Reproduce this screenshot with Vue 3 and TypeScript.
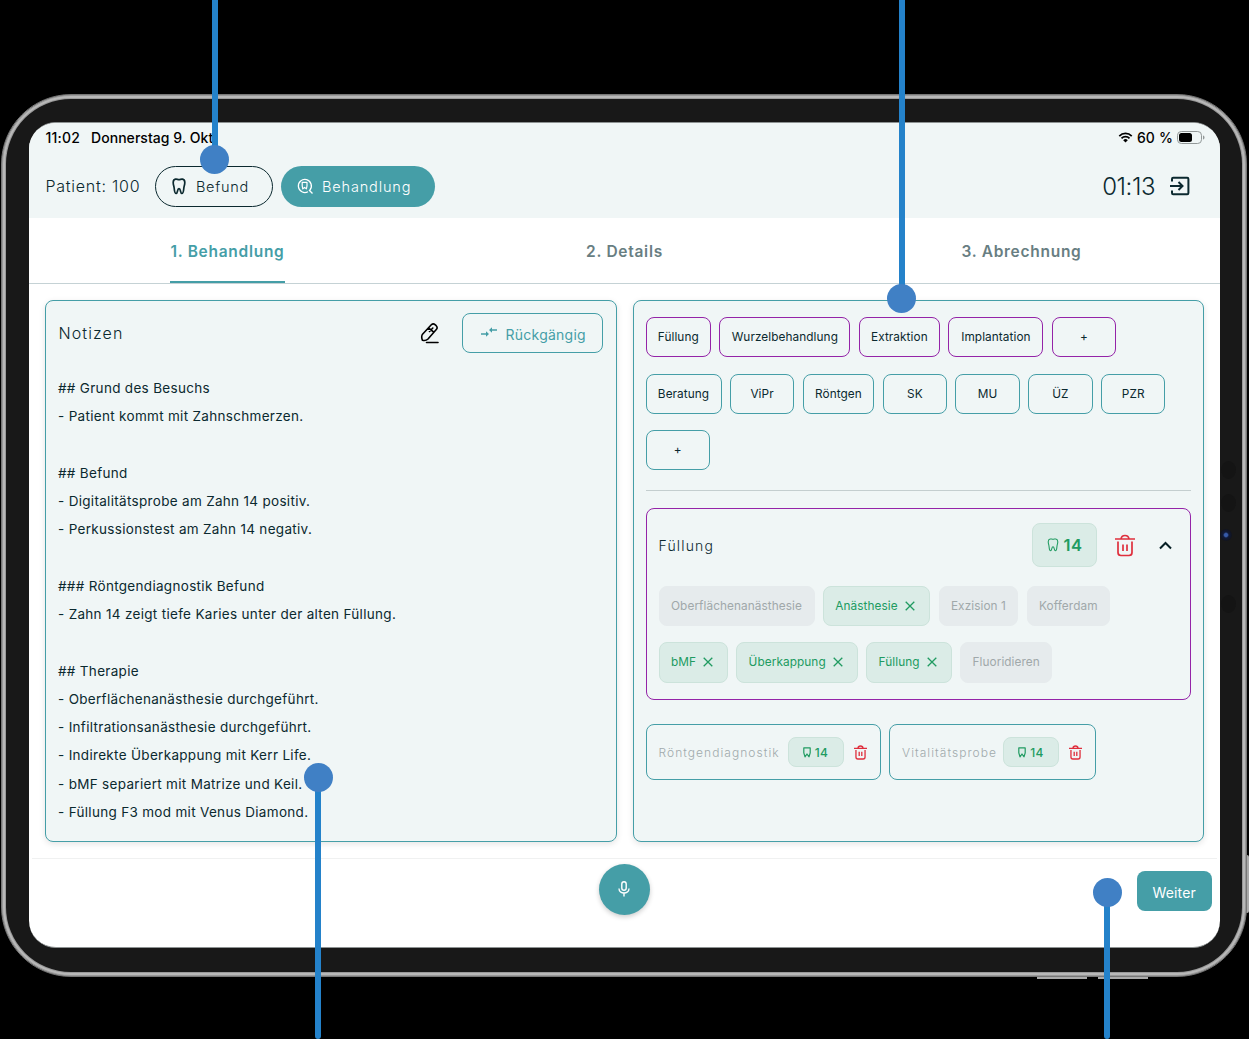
<script setup lang="ts">
interface Chip {
  label: string
  width: number
  active?: boolean
}

const treatments: Chip[] = [
  { label: 'Füllung', width: 65.5 },
  { label: 'Wurzelbehandlung', width: 131 },
  { label: 'Extraktion', width: 81.5 },
  { label: 'Implantation', width: 95 },
  { label: '+', width: 64.5 },
]
const services: Chip[] = [
  { label: 'Beratung', width: 76 },
  { label: 'ViPr', width: 64.5 },
  { label: 'Röntgen', width: 71.7 },
  { label: 'SK', width: 64.5 },
  { label: 'MU', width: 64.5 },
  { label: 'ÜZ', width: 64.5 },
  { label: 'PZR', width: 64.5 },
  { label: '+', width: 64.5 },
]
const steps: Chip[] = [
  { label: 'Oberflächenanästhesie', width: 156 },
  { label: 'Anästhesie', width: 107.5, active: true },
  { label: 'Exzision 1', width: 79.7 },
  { label: 'Kofferdam', width: 83.5 },
  { label: 'bMF', width: 69.3, active: true },
  { label: 'Überkappung', width: 121.7, active: true },
  { label: 'Füllung', width: 85.8, active: true },
  { label: 'Fluoridieren', width: 92 },
]
const diagnostics: Chip[] = [
  { label: 'Röntgendiagnostik', width: 235 },
  { label: 'Vitalitätsprobe', width: 207 },
]
const notes: string[] = [
  '## Grund des Besuchs',
  '- Patient kommt mit Zahnschmerzen.',
  '',
  '## Befund',
  '- Digitalitätsprobe am Zahn 14 positiv.',
  '- Perkussionstest am Zahn 14 negativ.',
  '',
  '### Röntgendiagnostik Befund',
  '- Zahn 14 zeigt tiefe Karies unter der alten Füllung.',
  '',
  '## Therapie',
  '- Oberflächenanästhesie durchgeführt.',
  '- Infiltrationsanästhesie durchgeführt.',
  '- Indirekte Überkappung mit Kerr Life.',
  '- bMF separiert mit Matrize und Keil.',
  '- Füllung F3 mod mit Venus Diamond.',
]
const toothPath =
  'M3.500 1.200C2 1.500 1.200 2.700 1.200 4.500c0 2.500.8 3.500 1 5.800.2 2.400.4 5.200 1.900 5.200 1.700 0 1-4.800 2.900-4.800s1.200 4.800 2.900 4.800c1.500 0 1.700-2.800 1.900-5.200.2-2.300 1-3.300 1-5.800 0-1.800-.8-3-2.300-3.300C9 .9 8.500 1.600 7 1.600S5 .9 3.500 1.200Z'
const trashPath =
  'M0 5h20M6 5c.3-2.300 1.600-3.500 4-3.500S13.700 2.700 14 5M3 7.500v11c0 2 1 3 3 3h8c2 0 3-1 3-3v-11M8 10.500v6.500M12 10.500v6.500'
</script>

<template>
  <main class="stage">
    <i class="hw side"></i>
    <i class="hw bottom first"></i>
    <i class="hw bottom second"></i>
    <div class="tablet">
      <i class="sensor s1"></i>
      <i class="sensor s2"></i>
      <i class="sensor s3"></i>
      <i class="lens"></i>
      <div class="screen">
        <header class="header">
          <div class="status">
            <span class="clock">11:02</span>
            <span class="date">Donnerstag 9. Okt</span>
            <svg class="wifi" width="15" height="11" viewBox="0 0 16 12">
              <path d="M1.200 4.400a9.700 9.700 0 0 1 13.600 0M3.600 7a6.200 6.200 0 0 1 8.800 0" fill="none" stroke="#000" stroke-width="1.900" />
              <path d="M8 11.500 5.500 8.900a3.500 3.500 0 0 1 5 0Z" />
            </svg>
            <span class="percent">60 %</span>
            <svg class="battery" width="28" height="13" viewBox="0 0 28 13">
              <rect x=".5" y=".5" width="24" height="12" rx="3.800" fill="none" stroke="#929898" />
              <rect x="2" y="2" width="13" height="9" rx="2.500" />
              <path d="M26 4.500c2 .6 2 3.400 0 4Z" fill="#929898" />
            </svg>
          </div>
          <div class="toolbar">
            <span class="patient">Patient: 100</span>
            <button class="pill outline">
              <svg width="14" height="17" viewBox="0 0 14 17"><path :d="toothPath" class="line" stroke-width="1.700" /></svg>
              <span>Befund</span>
            </button>
            <button class="pill filled">
              <svg width="17" height="17" viewBox="0 0 17 17">
                <path d="M11 13.700a6.500 6.500 0 1 1 2-1.700M12 12l3.500 3.500" class="line" stroke-width="1.300" />
                <path d="M5.200 4.400h4.800v3.500l-.6 3-1.800-1.500-1.800 1.500-.6-3Z" class="line" stroke-width="1.200" />
              </svg>
              <span>Behandlung</span>
            </button>
            <span class="timer">01:13</span>
            <svg class="exit" width="20" height="20" viewBox="0 0 20 20">
              <path d="M2 5.500V3q0-1.200 1.200-1.200h14q1.200 0 1.200 1.200v14q0 1.200-1.200 1.200h-14Q2 18.200 2 17v-2.500M0 10h12M8.500 6l4 4-4 4" fill="none" stroke="currentColor" stroke-width="2" />
            </svg>
          </div>
        </header>
        <nav class="tabs">
          <div class="tab current"><span>1. Behandlung</span></div>
          <div class="tab"><span>2. Details</span></div>
          <div class="tab third"><span>3. Abrechnung</span></div>
        </nav>
        <div class="panels">
          <section class="panel notes">
            <div class="notes-head">
              <h2>Notizen</h2>
              <svg class="eraser" width="20" height="22" viewBox="0 0 20 22">
                <path d="M2.300 12.500 11.300 2.800q1.900-1.900 3.700-.2l1.200 1.100q1.800 1.900.1 3.800L8 17q-2.200 2.200-5.500 1.300-1.500-3.300-.2-5.800ZM8.500 6l5.300 4.200M9.500 9.500l3.300-3.500M6.500 20.500H18" fill="none" stroke="#000" stroke-width="1.600" stroke-linecap="round" stroke-linejoin="round" />
              </svg>
              <button class="undo">
                <svg width="16" height="12" viewBox="0 0 16 12">
                  <path d="M0 8h7M9 4h7" fill="none" stroke="currentColor" stroke-width="1.300" />
                  <path d="m5 5.200 3 2.800-3 2.800ZM11 1.200 8 4l3 2.800Z" fill="currentColor" />
                </svg>
                <span>Rückgängig</span>
              </button>
            </div>
            <div class="note-text">
              <p v-for="(line, i) in notes" :key="i">{{ line }}</p>
            </div>
          </section>
          <section class="panel actions">
            <div class="chips violet">
              <button v-for="chip in treatments" :key="chip.label" class="chip" :style="{ width: chip.width + 'px' }">{{ chip.label }}</button>
            </div>
            <div class="chips teal">
              <button v-for="chip in services" :key="chip.label" class="chip" :style="{ width: chip.width + 'px' }">{{ chip.label }}</button>
            </div>
            <hr />
            <article class="group">
              <div class="group-head">
                <h3>Füllung</h3>
                <span class="tooth-badge">
                  <svg width="12" height="14" viewBox="0 0 14 17"><path :d="toothPath" class="line" stroke-width="1.300" /></svg>
                  14
                </span>
                <svg class="trash" width="20" height="23" viewBox="0 0 20 23"><path :d="trashPath" class="line" stroke-width="1.700" /></svg>
                <svg class="chevron" width="13" height="9" viewBox="0 0 13 9"><path d="m1 7.500 5.500-5.500L12 7.500" fill="none" stroke="#061f25" stroke-width="2" /></svg>
              </div>
              <div class="chips steps">
                <button v-for="chip in steps" :key="chip.label" class="chip" :class="{ active: chip.active }" :style="{ width: chip.width + 'px' }">
                  {{ chip.label }}
                  <svg v-if="chip.active" width="10" height="10" viewBox="0 0 10 10"><path d="m.7.7 8.600 8.600M9.300.7.7 9.300" class="line" stroke-width="1.300" /></svg>
                </button>
              </div>
            </article>
            <div class="diagnostics">
              <div v-for="item in diagnostics" :key="item.label" class="diagnostic" :style="{ width: item.width + 'px' }">
                <span class="name">{{ item.label }}</span>
                <span class="tooth-badge small">
                  <svg width="8" height="11" viewBox="0 0 8 11"><path d="M.8.9h6.400v5L6 9.800 4 7 2 9.800.8 5.900Z" class="line" stroke-width="1.200" /></svg>
                  14
                </span>
                <svg class="trash" width="13" height="15" viewBox="0 0 20 23"><path :d="trashPath" class="line" stroke-width="2" /></svg>
              </div>
            </div>
          </section>
        </div>
        <footer class="footer">
          <button class="mic" aria-label="Aufnahme">
            <svg width="14" height="18" viewBox="0 0 14 18"><path d="M4.800 4a2.200 2.200 0 0 1 4.400 0v4a2.200 2.200 0 0 1-4.400 0ZM2 8.500c0 6 10 6 10 0M7 13v3.500" class="line" stroke-width="1.400" /></svg>
          </button>
          <button class="next">Weiter</button>
        </footer>
      </div>
    </div>
    <i class="pin down p1"></i>
    <i class="pin down p2"></i>
    <i class="pin up p3"></i>
    <i class="pin up p4"></i>
  </main>
</template>

<style>
body {
  margin: 0;
  background: #000;
}
</style>

<style scoped>
* {
  box-sizing: border-box;
}
button {
  font: inherit;
  color: inherit;
  background: none;
  border: 0;
  padding: 0;
}
h2,
h3,
p {
  margin: 0;
  font-weight: 400;
}
svg {
  flex: none;
  display: block;
}
.line {
  fill: none;
  stroke: currentColor;
  stroke-linejoin: round;
}
.stage {
  position: relative;
  width: 1249px;
  height: 1039px;
  overflow: hidden;
  background: #000;
  padding: 94px 0 0 1px;
  font-family: Inter, 'Liberation Sans', sans-serif;
  color: #0b292f;
}
.tablet {
  position: relative;
  width: 1246px;
  height: 883px;
  border: 1px solid #777;
  border-radius: 70px;
  background: #181818;
  box-shadow: inset 0 0 0 1px #989898, inset 0 0 0 3px #b8b8b8, inset 0 0 0 4px #999;
  padding: 27px;
}
.hw {
  position: absolute;
  background: #aaa;
}
.side {
  left: 1245px;
  top: 855px;
  width: 4px;
  height: 58px;
  border-radius: 2px;
}
.bottom {
  top: 976px;
  width: 50px;
  height: 3px;
}
.first {
  left: 1037px;
}
.second {
  left: 1098px;
}
.sensor {
  position: absolute;
  left: 1219px;
  width: 15px;
  height: 18px;
  border-radius: 50%;
  background: #141414;
}
.s1 {
  top: 366px;
}
.s2 {
  top: 399px;
}
.s3 {
  top: 500px;
}
.lens {
  position: absolute;
  left: 1218px;
  top: 434px;
  width: 12px;
  height: 12px;
  border-radius: 50%;
  background: radial-gradient(circle, #365aa8 0 1.500px, #101a38 3px, #11131d 6px);
}
.screen {
  position: relative;
  width: 1191px;
  height: 826px;
  border-radius: 27px;
  background: #fff;
  border-top: 1px solid #8d9292;
  border-bottom: 1px solid #8d9292;
  overflow: hidden;
  display: flex;
  flex-direction: column;
}
.header {
  height: 95px;
  background: #f0f6f6;
  flex: none;
}
.status {
  height: 29px;
  padding: 0 15px 0 16.500px;
  display: flex;
  align-items: center;
  color: #000;
  font-size: 14px;
  font-weight: 500;
}
.clock {
  width: 45.500px;
  letter-spacing: 0.200px;
}
.date {
  letter-spacing: 0.050px;
}
.wifi {
  margin-left: auto;
}
.percent {
  margin: 0 4px 0 4px;
  letter-spacing: 0.150px;
}
.toolbar {
  display: flex;
  align-items: center;
  height: 40.500px;
  margin-top: 14px;
  padding: 0 30px 0 16.500px;
}
.patient {
  width: 109.500px;
  font-size: 16px;
  font-weight: 300;
  letter-spacing: 0.750px;
  white-space: nowrap;
}
.pill {
  height: 40.500px;
  border-radius: 21px;
  display: flex;
  align-items: center;
  font-size: 14.500px;
  font-weight: 300;
}
.outline {
  width: 118px;
  border: 1px solid #0b292f;
  padding-left: 16px;
  gap: 10px;
  margin-right: 8px;
  letter-spacing: 0.700px;
}
.filled {
  width: 154px;
  background: #459ea7;
  color: #fff;
  padding-left: 16px;
  gap: 8px;
  letter-spacing: 0.850px;
}
.timer {
  margin-left: auto;
  font-size: 24px;
  font-weight: 300;
  letter-spacing: -0.450px;
  padding-top: 1px;
}
.exit {
  margin-left: 15px;
}
.tabs {
  height: 66px;
  flex: none;
  display: grid;
  grid-template-columns: repeat(3, 1fr);
  border-bottom: 1px solid #c5d2d5;
}
.tab {
  display: flex;
  justify-content: center;
  font-size: 15.500px;
  font-weight: 600;
  letter-spacing: 0.720px;
  color: #687e82;
}
.tab span {
  height: 65px;
  line-height: 67px;
}
.current {
  color: #459ea7;
}
.current span {
  border-bottom: 2px solid #459ea7;
}
.panels {
  display: flex;
  gap: 16px;
  padding: 16px 16px 0;
}
.panel {
  height: 542px;
  width: 571.500px;
  border: 1px solid #459ea7;
  border-radius: 8px;
  background: #f0f6f6;
  box-shadow: 0 2px 6px #0000001c;
  padding: 12px;
}
.notes-head {
  display: flex;
  align-items: center;
  height: 40px;
}
.notes-head h2 {
  font-size: 16px;
  font-weight: 300;
  letter-spacing: 1.100px;
  padding-left: 0.500px;
}
.eraser {
  margin-left: auto;
  margin-right: 22.500px;
}
.undo {
  width: 141px;
  height: 40px;
  border: 1px solid #459ea7;
  border-radius: 8px;
  color: #459ea7;
  display: flex;
  align-items: center;
  padding-left: 18px;
  gap: 9px;
  font-size: 14px;
  letter-spacing: 0.250px;
  position: relative;
  left: -1px;
}
.undo span {
  padding-top: 3px;
}
.undo svg {
  margin-bottom: 2px;
}
.note-text {
  margin-top: 21px;
}
.note-text p {
  height: 28.270px;
  line-height: 28.270px;
  font-size: 13.500px;
  letter-spacing: 0.310px;
  white-space: pre;
}
.actions {
  padding-top: 16px;
}
.chips {
  display: flex;
  flex-wrap: wrap;
  gap: 16.300px 8.300px;
}
.chip {
  height: 40.300px;
  border: 1px solid #459ea7;
  border-radius: 8px;
  display: flex;
  align-items: center;
  justify-content: center;
  font-size: 11.800px;
  letter-spacing: 0.080px;
  white-space: nowrap;
}
.violet .chip {
  border-color: #9424a8;
}
.teal {
  margin-top: 16.300px;
}
hr {
  border: 0;
  height: 1px;
  background: #c4cecf;
  margin: 20px 0 17px;
}
.group {
  height: 191.500px;
  border: 1px solid #9424a8;
  border-radius: 8px;
  padding: 14px 12px 0;
}
.group-head {
  display: flex;
  align-items: center;
  height: 44px;
  margin-bottom: 18.200px;
}
h3 {
  font-size: 14px;
  font-weight: 300;
  letter-spacing: 1.150px;
  margin-right: auto;
}
.tooth-badge {
  width: 65px;
  height: 44px;
  border: 1px solid #cce3db;
  border-radius: 8px;
  background: #dbece7;
  color: #209b61;
  display: flex;
  align-items: center;
  justify-content: center;
  gap: 5px;
  font-size: 16.500px;
  font-weight: 600;
  letter-spacing: 0.400px;
}
.trash {
  color: #df2f3d;
}
.group-head .trash {
  margin: 0 24px 0 18px;
}
.chevron {
  margin-right: 6px;
}
.steps .chip {
  border-color: #e6ebed;
  background: #e6ebed;
  color: #a0a8aa;
}
.steps .chip.active {
  border-color: #cce3db;
  background: #dbece7;
  color: #209b61;
  gap: 7px;
  justify-content: flex-start;
  padding-left: 11.500px;
}
.diagnostics {
  display: flex;
  gap: 8.500px;
  margin-top: 24.500px;
}
.diagnostic {
  height: 56px;
  border: 1px solid #459ea7;
  border-radius: 8px;
  display: flex;
  align-items: center;
  padding: 0 13px 0 12px;
  color: #a0aaac;
  font-size: 12px;
}
.name {
  font-weight: 300;
  letter-spacing: 1.050px;
  margin-right: auto;
  white-space: nowrap;
}
.small {
  width: 56px;
  height: 30px;
  font-size: 12px;
  font-weight: 500;
  gap: 4px;
  margin-right: 10px;
  letter-spacing: 0.200px;
  flex: none;
}
.footer {
  position: relative;
  height: 89px;
  margin: 15.500px 3px 0;
  border-top: 1px solid #f0f1f1;
  display: flex;
  justify-content: flex-end;
  padding: 12px 5px 0 0;
}
.mic {
  position: absolute;
  left: 566.500px;
  top: 5px;
  width: 51.500px;
  height: 51.500px;
  border-radius: 50%;
  display: flex;
  align-items: center;
  justify-content: center;
  background: #459ea7;
  color: #fff;
  box-shadow: 0 2px 5px #0003;
}
.next {
  width: 75.500px;
  height: 40.500px;
  border-radius: 8px;
  background: #459ea7;
  color: #fff;
  font-size: 14px;
  letter-spacing: 0.150px;
  padding-top: 4px;
}
.pin {
  position: absolute;
  width: 6px;
  background: #2482ca;
  border-radius: 3px;
}
.pin::after {
  content: '';
  position: absolute;
  left: -11px;
  width: 29px;
  height: 29px;
  border-radius: 50%;
  background: #4080c5;
}
.down {
  top: -3px;
}
.down::after {
  bottom: -14px;
  left: -12px;
}
.up {
  bottom: 0;
}
.up::after {
  top: -14px;
}
.p1 {
  left: 212px;
  height: 163px;
}
.p2 {
  left: 899px;
  height: 302px;
}
.p3 {
  left: 315px;
  height: 262px;
}
.p4 {
  left: 1104px;
  height: 147px;
}
</style>
